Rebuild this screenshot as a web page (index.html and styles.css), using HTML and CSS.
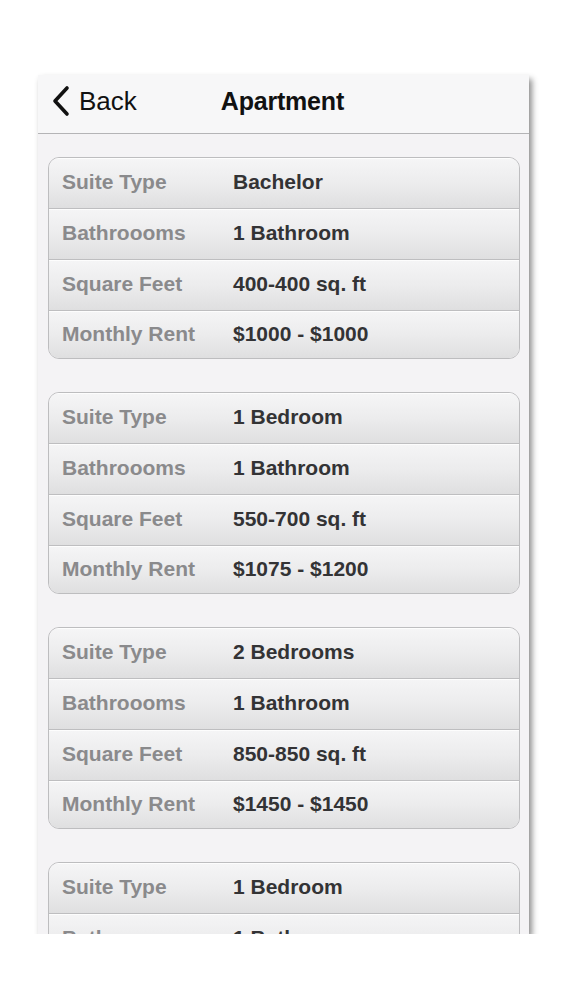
FILE: index.html
```html
<!DOCTYPE html>
<html>
<head>
<meta charset="utf-8">
<link rel="stylesheet" href="styles.css">
</head>
<body>
<div class="phone">
  <header class="nav">
    <div class="back">
      <svg class="chev" width="22" height="32" viewBox="0 0 22 32"><path d="M17 3 L5 16 L17 29" fill="none" stroke="#111" stroke-width="3.6" stroke-linecap="round" stroke-linejoin="round"/></svg>
      <span>Back</span>
    </div>
    <div class="title">Apartment</div>
  </header>
  <main class="content">
    <section class="card">
      <div class="row"><span class="label">Suite Type</span><span class="value">Bachelor</span></div>
      <div class="row"><span class="label">Bathroooms</span><span class="value">1 Bathroom</span></div>
      <div class="row"><span class="label">Square Feet</span><span class="value">400-400 sq. ft</span></div>
      <div class="row"><span class="label">Monthly Rent</span><span class="value">$1000 - $1000</span></div>
    </section>
    <section class="card">
      <div class="row"><span class="label">Suite Type</span><span class="value">1 Bedroom</span></div>
      <div class="row"><span class="label">Bathroooms</span><span class="value">1 Bathroom</span></div>
      <div class="row"><span class="label">Square Feet</span><span class="value">550-700 sq. ft</span></div>
      <div class="row"><span class="label">Monthly Rent</span><span class="value">$1075 - $1200</span></div>
    </section>
    <section class="card">
      <div class="row"><span class="label">Suite Type</span><span class="value">2 Bedrooms</span></div>
      <div class="row"><span class="label">Bathroooms</span><span class="value">1 Bathroom</span></div>
      <div class="row"><span class="label">Square Feet</span><span class="value">850-850 sq. ft</span></div>
      <div class="row"><span class="label">Monthly Rent</span><span class="value">$1450 - $1450</span></div>
    </section>
    <section class="card">
      <div class="row"><span class="label">Suite Type</span><span class="value">1 Bedroom</span></div>
      <div class="row"><span class="label">Bathroooms</span><span class="value">1 Bathroom</span></div>
      <div class="row"><span class="label">Square Feet</span><span class="value">550-700 sq. ft</span></div>
      <div class="row"><span class="label">Monthly Rent</span><span class="value">$1075 - $1200</span></div>
    </section>
  </main>
</div>
</body>
</html>
```
FILE: styles.css
```css
html, body {
  margin: 0;
  padding: 0;
  background: #ffffff;
}
body {
  font-family: "Liberation Sans", Arial, Helvetica, sans-serif;
}
.phone {
  margin: 75px 0 0 38px;
  width: 491px;
  height: 859px;
  overflow: hidden;
  background: #f4f3f5;
  box-shadow: 3px 4px 6px rgba(0, 0, 0, 0.45);
}
.nav {
  height: 59px;
  padding-bottom: 6px;
  box-sizing: border-box;
  border-bottom: 1px solid #b4b4b6;
  background: #f7f7f8;
  display: flex;
  align-items: center;
}
.back {
  display: flex;
  align-items: center;
  margin-left: 12px;
  font-size: 26px;
  color: #111;
  gap: 7px;
}
.chev {
  display: block;
}
.title {
  margin-left: 84px;
  font-size: 25px;
  font-weight: bold;
  color: #111;
  letter-spacing: -0.2px;
}
.content {
  padding: 23px 9px 0 10px;
  display: flex;
  flex-direction: column;
  gap: 33px;
}
.card {
  border: 1px solid #bdbdbf;
  border-radius: 11px;
  overflow: hidden;
  display: flex;
  flex-direction: column;
}
.row {
  height: 50px;
  display: grid;
  grid-template-columns: 171px 1fr;
  align-items: center;
  padding: 0 0 3px 13px;
  background: linear-gradient(to bottom, #f5f5f6 0%, #ececed 50%, #dfdfe0 100%);
  border-top: 1px solid #fdfdfd;
  font-size: 21px;
  font-weight: bold;
  box-sizing: border-box;
}
.row + .row {
  box-shadow: inset 0 1px 0 #fdfdfd;
  border-top: 1px solid #bebec0;
  height: 51px;
}
.row:last-child {
  height: 48px;
  padding-bottom: 1px;
}
.label {
  color: #8a8a8c;
}
.value {
  color: #333335;
}
```
